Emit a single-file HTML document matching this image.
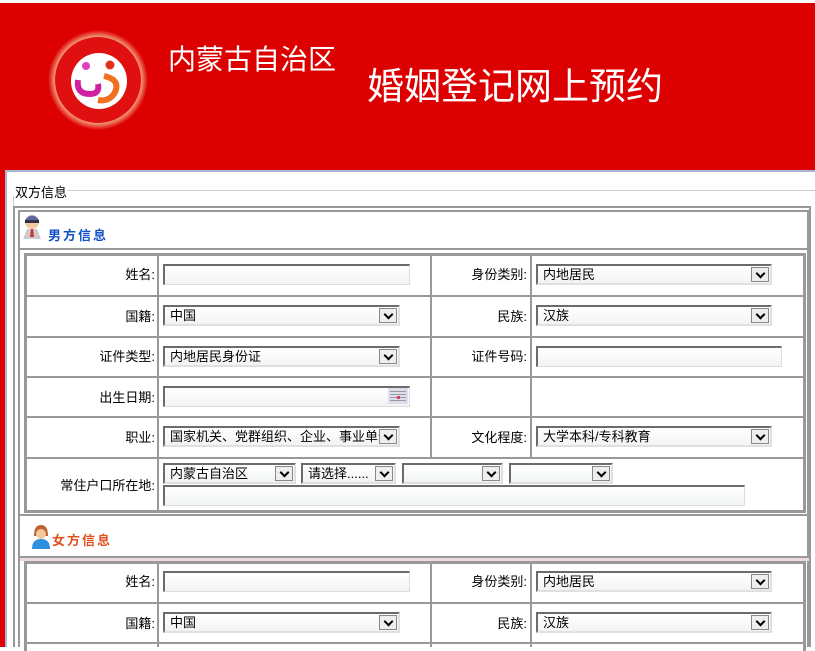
<!DOCTYPE html>
<html><head><meta charset="utf-8"><style>
*{margin:0;padding:0;box-sizing:border-box}
body{width:815px;height:647px;overflow:hidden;background:#fff;position:relative;font-family:"Liberation Sans","Noto Sans CJK SC","WenQuanYi Zen Hei",sans-serif;font-size:13px;color:#000}
.a{position:absolute}
.hdr{left:0;top:3px;width:815px;height:168px;background:#dd0000}
.t1{left:168px;top:38px;color:#fff;font-size:28px;letter-spacing:0px;white-space:nowrap}
.t2{left:367px;top:56px;color:#fff;font-size:37px;letter-spacing:0px;white-space:nowrap}
.hl{background:#999}
.inp{position:absolute;height:21px;background:linear-gradient(#fff,#f2f4f4);border-top:2px solid #6b6b6b;border-left:2px solid #6b6b6b;border-right:1px solid #ddd;border-bottom:1px solid #ddd}
.sel{position:absolute;height:21px;background:linear-gradient(#fff,#f2f4f4);border-top:2px solid #6b6b6b;border-left:2px solid #6b6b6b;border-right:2px solid #e0e0e0;border-bottom:2px solid #e0e0e0;padding-left:5px;line-height:17px;font-size:13px;white-space:nowrap;overflow:hidden}
.sel i{position:absolute;right:1px;top:1px;width:18px;height:15px;border:1px solid #888;background:#eee}
.sel i:after{content:"";position:absolute;left:5px;top:2px;width:5px;height:5px;border-right:2px solid #000;border-bottom:2px solid #000;transform:rotate(45deg)}
.lb{position:absolute;text-align:right;white-space:nowrap;margin-top:-2px}
</style></head><body>
<div class="a hdr"></div>
<svg class="a" style="left:46px;top:28px" width="104" height="104">
<defs><radialGradient id="g"><stop offset="0.78" stop-color="#fff6c0"/><stop offset="1" stop-color="#dd0000"/></radialGradient></defs>
<circle cx="52" cy="52" r="50" fill="url(#g)"/>
<circle cx="52" cy="52" r="43" fill="#e01010"/>
<circle cx="53" cy="53" r="28" fill="#fff"/>
<circle cx="40" cy="38" r="4" fill="#e040c0"/><circle cx="64" cy="37" r="4.5" fill="#e03020"/>
<path d="M32 52 q-2 14 12 14 q10 0 8 -10" stroke="#d020a0" stroke-width="6" fill="none"/>
<path d="M58 48 q18 4 10 18 q-6 8 -16 6" stroke="#f07020" stroke-width="6" fill="none"/>
</svg>
<div class="a t1">内蒙古自治区</div>
<div class="a t2">婚姻登记网上预约</div>
<div class="a" style="left:0;top:171px;width:5px;height:476px;background:#dd0000"></div>
<div class="a" style="left:5px;top:170px;width:810px;height:2px;background:#aab4d4"></div>
<div class="a" style="left:5px;top:170px;width:2px;height:477px;background:#aab4d4"></div>
<div class="a" style="left:15px;top:182px">双方信息</div>
<div class="a" style="left:68px;top:190px;width:747px;height:1px;background:#ccc"></div>
<div class="a" style="left:13px;top:196px;width:1px;height:451px;background:#ccc"></div>
<div class="a" style="left:13px;top:206px;width:798px;height:441px;border:2px solid #999;border-bottom:none"></div>
<div class="a" style="left:18px;top:210px;width:791px;height:437px;border:2px solid #999;border-bottom:none"></div>
<svg class="a" style="left:22px;top:214px" width="22" height="26"><circle cx="10" cy="8" r="7" fill="#f3c9a0"/><path d="M3 6 q7 -9 14 0 z" fill="#5a6aa8"/><rect x="3" y="6" width="14" height="3" fill="#334"/><path d="M1 25 l4 -10 h10 l4 10 z" fill="#ccc"/><path d="M9 15 h2 l1 8 h-4z" fill="#d03030"/></svg>
<div class="a" style="left:48px;top:225px;color:#1050c8;font-weight:bold;letter-spacing:2px">男方信息</div>
<div class="a hl" style="left:18px;top:248px;width:791px;height:2px"></div>
<div class="a" style="left:24px;top:253px;width:782px;height:260px;border:3px solid #999"></div>
<div class="a hl" style="left:157px;top:255px;width:2px;height:256px"></div>
<div class="a hl" style="left:430px;top:255px;width:2px;height:203px"></div>
<div class="a hl" style="left:530px;top:255px;width:2px;height:203px"></div>
<div class="a hl" style="left:26px;top:295px;width:778px;height:2px"></div>
<div class="a hl" style="left:26px;top:336px;width:778px;height:2px"></div>
<div class="a hl" style="left:26px;top:376px;width:778px;height:2px"></div>
<div class="a hl" style="left:26px;top:416px;width:778px;height:2px"></div>
<div class="a hl" style="left:26px;top:457px;width:778px;height:2px"></div>
<div class="lb" style="right:660px;top:266px">姓名:</div>
<div class="inp" style="left:163px;top:264px;width:247px"></div>
<div class="lb" style="right:288px;top:266px">身份类别:</div>
<div class="sel" style="left:536px;top:264px;width:236px">内地居民<i></i></div>
<div class="lb" style="right:660px;top:308px">国籍:</div>
<div class="sel" style="left:163px;top:305px;width:237px">中国<i></i></div>
<div class="lb" style="right:288px;top:308px">民族:</div>
<div class="sel" style="left:536px;top:305px;width:236px">汉族<i></i></div>
<div class="lb" style="right:660px;top:348px">证件类型:</div>
<div class="sel" style="left:163px;top:346px;width:237px">内地居民身份证<i></i></div>
<div class="lb" style="right:288px;top:348px">证件号码:</div>
<div class="inp" style="left:536px;top:346px;width:246px"></div>
<div class="lb" style="right:660px;top:389px">出生日期:</div>
<div class="inp" style="left:163px;top:386px;width:247px"></div>
<svg class="a" style="left:388px;top:388px" width="20" height="16"><rect width="20" height="16" fill="#dde"/><g fill="#999"><rect x="2" y="3" width="16" height="1"/><rect x="2" y="6" width="16" height="1"/><rect x="2" y="9" width="16" height="1"/><rect x="2" y="12" width="16" height="1"/></g><rect x="9" y="8" width="3" height="3" fill="#d04060"/></svg>
<div class="lb" style="right:660px;top:429px">职业:</div>
<div class="sel" style="left:163px;top:426px;width:237px">国家机关、党群组织、企业、事业单位<i></i></div>
<div class="lb" style="right:288px;top:429px">文化程度:</div>
<div class="sel" style="left:536px;top:426px;width:236px">大学本科/专科教育<i></i></div>
<div class="lb" style="right:660px;top:477px">常住户口所在地:</div>
<div class="sel" style="left:163px;top:463px;width:133px">内蒙古自治区<i></i></div>
<div class="sel" style="left:301px;top:463px;width:95px">请选择......<i></i></div>
<div class="sel" style="left:402px;top:463px;width:101px"><i></i></div>
<div class="sel" style="left:509px;top:463px;width:104px"><i></i></div>
<div class="inp" style="left:163px;top:485px;width:582px"></div>
<div class="a hl" style="left:18px;top:514px;width:791px;height:2px"></div>
<svg class="a" style="left:30px;top:524px" width="20" height="26"><path d="M4 12 q0 -11 7 -11 q7 0 7 11 z" fill="#c06030"/><circle cx="11" cy="10" r="5" fill="#f3c9a0"/><path d="M2 25 q0 -10 9 -10 q9 0 9 10 z" fill="#3090e0"/></svg>
<div class="a" style="left:52px;top:530px;color:#e05020;font-weight:bold;letter-spacing:2px">女方信息</div>
<div class="a hl" style="left:18px;top:556px;width:791px;height:2px"></div>
<div class="a" style="left:20px;top:558px;width:789px;height:3px;background:#eedcdc"></div>
<div class="a" style="left:24px;top:561px;width:782px;height:90px;border:3px solid #999;border-bottom:none"></div>
<div class="a hl" style="left:157px;top:563px;width:2px;height:84px"></div>
<div class="a hl" style="left:430px;top:563px;width:2px;height:84px"></div>
<div class="a hl" style="left:530px;top:563px;width:2px;height:84px"></div>
<div class="a hl" style="left:26px;top:602px;width:778px;height:2px"></div>
<div class="a hl" style="left:26px;top:642px;width:778px;height:2px"></div>
<div class="lb" style="right:660px;top:573px">姓名:</div>
<div class="inp" style="left:163px;top:571px;width:247px"></div>
<div class="lb" style="right:288px;top:573px">身份类别:</div>
<div class="sel" style="left:536px;top:571px;width:236px">内地居民<i></i></div>
<div class="lb" style="right:660px;top:615px">国籍:</div>
<div class="sel" style="left:163px;top:612px;width:237px">中国<i></i></div>
<div class="lb" style="right:288px;top:615px">民族:</div>
<div class="sel" style="left:536px;top:612px;width:236px">汉族<i></i></div>
</body></html>
